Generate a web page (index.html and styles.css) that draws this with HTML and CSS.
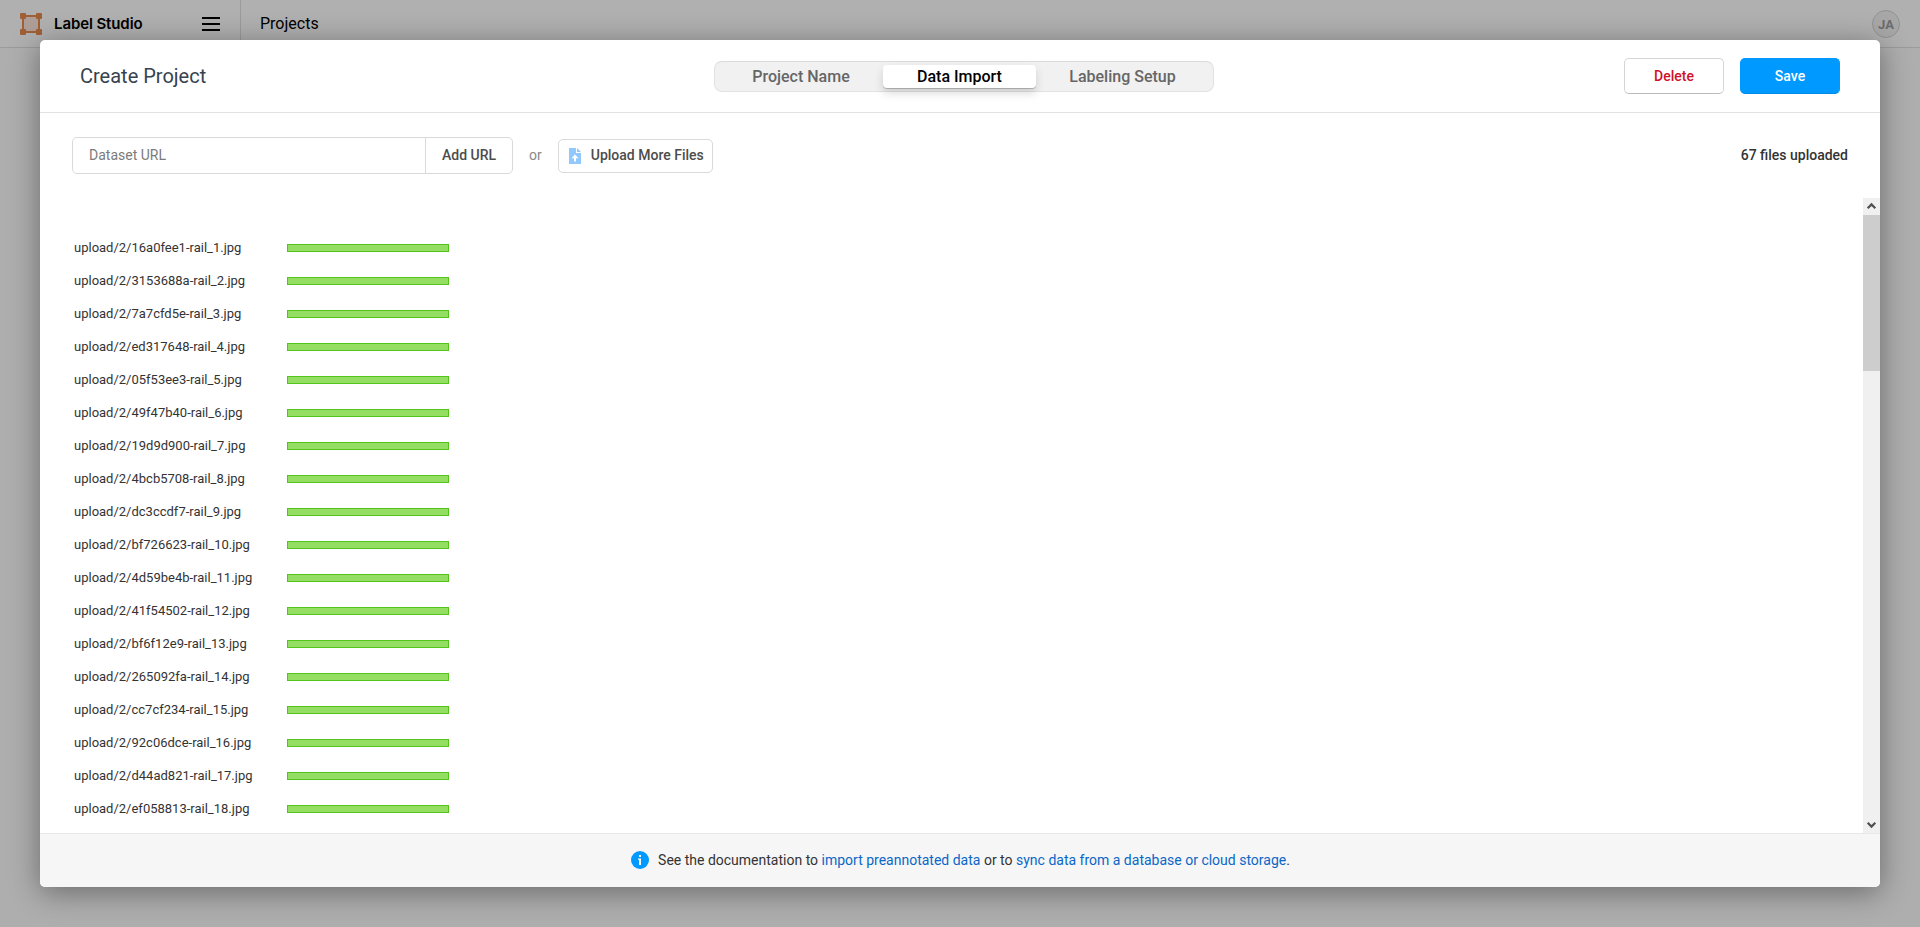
FILE: index.html
```html
<!DOCTYPE html>
<html lang="en">
<head>
<meta charset="utf-8">
<title>Label Studio</title>
<link rel="stylesheet" href="styles.css">
</head>
<body>
<header class="menu">
  <div class="brand">
    <svg class="logo" width="22" height="22" viewBox="0 0 22 22"><path d="M3 3h16v16H3z" fill="#f9e3d8" stroke="#e58a4c" stroke-width="2"/><g fill="#e58a4c"><rect width="6" height="6" rx="1"/><rect x="16" width="6" height="6" rx="1"/><rect y="16" width="6" height="6" rx="1"/><rect x="16" y="16" width="6" height="6" rx="1"/></g></svg>
    <span class="brand-name">Label Studio</span>
    <span class="burger"><i></i><i></i><i></i></span>
  </div>
  <span class="crumb">Projects</span>
  <span class="userpic">JA</span>
</header>
<div class="overlay">
  <main class="modal">
    <div class="modal-header">
      <h1 class="title">Create Project</h1>
      <div class="tabs"><span class="tab tab-name">Project Name</span><span class="tab tab-active">Data Import</span><span class="tab tab-setup">Labeling Setup</span></div>
      <div class="actions"><button class="btn btn-delete">Delete</button><button class="btn btn-save">Save</button></div>
    </div>
    <div class="toolbar">
      <div class="url-form"><input class="url-input" placeholder="Dataset URL"><button class="url-add">Add URL</button></div>
      <span class="or">or</span>
      <button class="upload"><svg width="12" height="16" viewBox="0 0 12 16"><path fill="#91c8ff" fill-rule="evenodd" d="M0 0h7v5h5v11H0zM6 6.5L2.500 10.200H5V13.500h2V10.200h2.500z"/><path fill="#91c8ff" d="M8 0l4 4H8z"/></svg><span class="upload-label">Upload More Files</span></button>
      <span class="count">67 files uploaded</span>
    </div>
    <div class="content">
      <div class="files">
        <div class="row"><span class="name">upload/2/16a0fee1-rail_1.jpg</span><span class="bar"></span></div>
        <div class="row"><span class="name">upload/2/3153688a-rail_2.jpg</span><span class="bar"></span></div>
        <div class="row"><span class="name">upload/2/7a7cfd5e-rail_3.jpg</span><span class="bar"></span></div>
        <div class="row"><span class="name">upload/2/ed317648-rail_4.jpg</span><span class="bar"></span></div>
        <div class="row"><span class="name">upload/2/05f53ee3-rail_5.jpg</span><span class="bar"></span></div>
        <div class="row"><span class="name">upload/2/49f47b40-rail_6.jpg</span><span class="bar"></span></div>
        <div class="row"><span class="name">upload/2/19d9d900-rail_7.jpg</span><span class="bar"></span></div>
        <div class="row"><span class="name">upload/2/4bcb5708-rail_8.jpg</span><span class="bar"></span></div>
        <div class="row"><span class="name">upload/2/dc3ccdf7-rail_9.jpg</span><span class="bar"></span></div>
        <div class="row"><span class="name">upload/2/bf726623-rail_10.jpg</span><span class="bar"></span></div>
        <div class="row"><span class="name">upload/2/4d59be4b-rail_11.jpg</span><span class="bar"></span></div>
        <div class="row"><span class="name">upload/2/41f54502-rail_12.jpg</span><span class="bar"></span></div>
        <div class="row"><span class="name">upload/2/bf6f12e9-rail_13.jpg</span><span class="bar"></span></div>
        <div class="row"><span class="name">upload/2/265092fa-rail_14.jpg</span><span class="bar"></span></div>
        <div class="row"><span class="name">upload/2/cc7cf234-rail_15.jpg</span><span class="bar"></span></div>
        <div class="row"><span class="name">upload/2/92c06dce-rail_16.jpg</span><span class="bar"></span></div>
        <div class="row"><span class="name">upload/2/d44ad821-rail_17.jpg</span><span class="bar"></span></div>
        <div class="row"><span class="name">upload/2/ef058813-rail_18.jpg</span><span class="bar"></span></div>
      </div>
      <div class="scrollbar">
        <svg class="arrow" width="17" height="17" viewBox="0 0 17 17"><path d="M4.700 10.200L8.500 6.400l3.800 3.800" fill="none" stroke="#505050" stroke-width="2.200"/></svg>
        <div class="thumb"></div>
        <svg class="arrow arrow-down" width="17" height="17" viewBox="0 0 17 17"><path d="M4.700 6.800l3.800 3.800 3.800-3.800" fill="none" stroke="#505050" stroke-width="2.200"/></svg>
      </div>
    </div>
    <div class="modal-footer">
      <svg class="info" width="18" height="18" viewBox="0 0 18 18"><circle cx="9" cy="9" r="9" fill="#09f"/><path d="M8 4h2v2H8zM7 7.500h3V14H8V8.700H7z" fill="#fff"/></svg>
      <span>See the documentation to <a>import preannotated data</a> or to <a>sync data from a database or cloud storage</a>.</span>
    </div>
  </main>
</div>
</body>
</html>
```
FILE: styles.css
```css
* { box-sizing: border-box; }
body { margin: 0; height: 927px; overflow: hidden; background: #fafafa; font-family: Roboto, sans-serif; color: #333; }
button, input { font-family: inherit; margin: 0; }

.menu { height: 48px; display: flex; align-items: center; border-bottom: 1px solid #dfdfdf; background: #fdfdfd; color: #000; }
.brand { width: 241px; height: 47px; padding: 0 20px; display: flex; align-items: center; border-right: 1px solid #dfdfdf; }
.logo { margin-top: 1px; }
.brand-name { margin-left: 12px; font: 600 15px/20px Inter, sans-serif; letter-spacing: -0.1px; white-space: nowrap; }
.burger { margin-left: auto; display: grid; gap: 4px; width: 18px; margin-top: 1px; }
.burger i { height: 2px; background: #000; }
.crumb { margin-left: 19px; font-size: 16px; line-height: 22px; }
.userpic { margin-left: auto; margin-right: 20px; width: 28px; height: 28px; margin-top: 1px; border: 1px solid #d0d0d0; border-radius: 50%; background: #f0f0f0; color: #9b9b9b; font-size: 13px; font-weight: 700; line-height: 27px; text-align: center; }

.overlay { position: absolute; inset: 0; padding: 40px; background: rgba(0, 0, 0, 0.3); }
.modal { height: 847px; display: flex; flex-direction: column; overflow: hidden; border-radius: 5px; background: #fff; box-shadow: 0 5px 30px rgba(0, 0, 0, 0.4); }
.modal-header { height: 73px; padding: 0 40px; display: grid; grid-template-columns: 634px 500px 1fr; align-items: center; border-bottom: 1px solid #e2e2e2; }
.title { margin: 0; font-size: 20px; line-height: 24px; font-weight: 400; color: #36434f; }
.tabs { height: 31px; margin-top: 1px; padding: 3px 4px; display: flex; align-items: center; border: 1px solid #e2e2e2; border-top-color: #dadada; border-radius: 8px; background: #f1f1f1; font-size: 16px; font-weight: 500; color: #666; }
.tab { flex: none; height: 23px; line-height: 23px; text-align: center; }
.tab-name { width: 164px; }
.tab-active { width: 153px; border-radius: 4px; background: #fff; color: #000; box-shadow: 0 1px 0 rgba(0, 0, 0, 0.2), 0 5px 10px rgba(0, 0, 0, 0.15); }
.tab-setup { width: 173px; }
.actions { display: flex; justify-content: flex-end; gap: 16px; }
.btn { width: 100px; height: 36px; padding: 0; border: 1px solid #d5d5d5; border-bottom-color: #bbb; border-radius: 5px; background: #fff; font-size: 14px; font-weight: 500; }
.btn-delete { color: #cf1129; }
.btn-save { border-color: #09f; border-bottom-color: #008ae6; background: #09f; color: #fff; }

.toolbar { height: 85px; padding: 0 32px; display: flex; align-items: center; }
.url-form { display: flex; width: 441px; height: 37px; border: 1px solid #d9d9d9; border-radius: 5px; }
.url-input { width: 352px; padding: 0 16px 2px; border: 0; background: none; font-size: 14px; }
.url-input::placeholder { color: #7b7b7b; }
.url-add { flex: 1; border: 0; border-left: 1px solid #d9d9d9; background: none; padding: 0 0 2px; color: #4c4c4c; font-size: 14px; font-weight: 500; }
.or { margin: 0 16px; padding-bottom: 2px; color: #898989; font-size: 14px; }
.upload { width: 155px; height: 34px; padding: 0 0 0 10px; display: flex; align-items: center; gap: 10px; border: 1px solid #d9d9d9; border-radius: 5px; background: #fff; color: #4c4c4c; font-size: 14px; font-weight: 500; white-space: nowrap; }
.upload-label { padding-bottom: 2px; }
.count { margin-left: auto; padding-bottom: 2px; font-size: 14px; font-weight: 500; }

.content { flex: 1; min-height: 0; display: flex; }
.files { flex: 1; padding: 33px 34px 0; }
.row { height: 33px; display: flex; align-items: center; }
.name { width: 213px; font-size: 13px; white-space: nowrap; }
.bar { width: 162px; height: 8px; border: 1px solid #52c41a; background: #95de64; }
.scrollbar { width: 17px; display: flex; flex-direction: column; background: #f0f0f0; }
.arrow { display: block; }
.thumb { height: 156px; background: #cdcdcd; }
.arrow-down { margin-top: auto; }

.modal-footer { height: 54px; padding: 0 0 1px 1px; display: flex; align-items: center; justify-content: center; gap: 9px; border-top: 1px solid #e8e8e8; background: #f6f6f6; font-size: 14px; }
.modal-footer a { color: #0a66c8; }
```
